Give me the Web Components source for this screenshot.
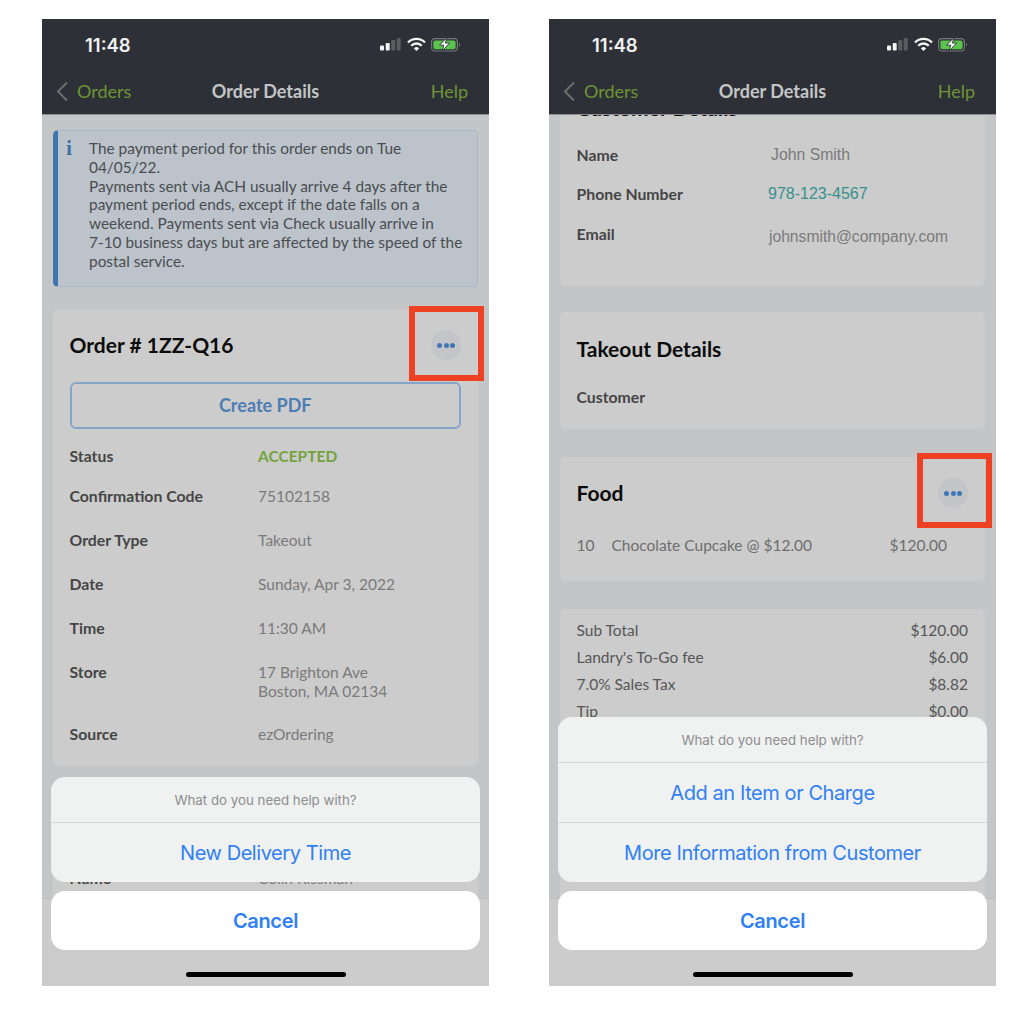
<!doctype html>
<html>
<head>
<meta charset="utf-8">
<style>
  html, body { margin: 0; background: #fff; }
  body { font-family: Lato, "Noto Sans", sans-serif; }
  .phones { display: flex; gap: 60px; padding: 19px 0 0 42px; }
</style>
</head>
<body>
<div class="phones">
  <phone-screen>
    <info-note>The payment period for this order ends on Tue<br>04/05/22.<br>Payments sent via ACH usually arrive 4 days after the payment period ends, except if the date falls on a weekend. Payments sent via Check usually arrive in<br>7-10 business days but are affected by the speed of the postal service.</info-note>
    <detail-card heading="Order # 1ZZ-Q16" more class="order">
      <pdf-button>Create PDF</pdf-button>
      <detail-row label="Status" h="40"><span style="color:#73a33c;font-weight:700">ACCEPTED</span></detail-row>
      <detail-row label="Confirmation Code" h="44">75102158</detail-row>
      <detail-row label="Order Type" h="44">Takeout</detail-row>
      <detail-row label="Date" h="44">Sunday, Apr 3, 2022</detail-row>
      <detail-row label="Time" h="44">11:30 AM</detail-row>
      <detail-row label="Store" h="62">17 Brighton Ave<br>Boston, MA 02134</detail-row>
      <detail-row label="Source" h="44">ezOrdering</detail-row>
    </detail-card>
    <detail-card class="next">
      <detail-row label="Name" h="44">Colin Rissman</detail-row>
    </detail-card>
    <action-sheet slot="sheet" title="What do you need help with?" actions="New Delivery Time"></action-sheet>
  </phone-screen>

  <phone-screen>
    <detail-card heading="Customer Details" class="customer">
      <detail-row label="Name" h="39" plain style="--shift:194.500px">John Smith</detail-row>
      <detail-row label="Phone Number" h="40" plain style="--shift:191.500px"><span style="color:#37918d;font-size:16px">978-123-4567</span></detail-row>
      <detail-row label="Email" h="40" plain style="--shift:192.500px"><div style="padding-top:3px;font-size:15.650px">johnsmith@company.com</div></detail-row>
    </detail-card>
    <detail-card heading="Takeout Details" class="takeout">
      <detail-row label="Customer" h="40" style="margin-top:3px"></detail-row>
    </detail-card>
    <detail-card heading="Food" more class="food">
      <food-line qty="10" item="Chocolate Cupcake @ $12.00" price="$120.00" style="margin-top:7px"></food-line>
    </detail-card>
    <detail-card class="summary">
      <total-line label="Sub Total" value="$120.00"></total-line>
      <total-line label="Landry's To-Go fee" value="$6.00"></total-line>
      <total-line label="7.0% Sales Tax" value="$8.82"></total-line>
      <total-line label="Tip" value="$0.00"></total-line>
    </detail-card>
    <action-sheet slot="sheet" title="What do you need help with?" actions="Add an Item or Charge|More Information from Customer"></action-sheet>
  </phone-screen>
</div>

<script>
class PhoneScreen extends HTMLElement {
  constructor() {
    super();
    this.attachShadow({ mode: "open" }).innerHTML = `
      <style>
        :host { display: flex; flex-direction: column; position: relative; width: 447px; height: 967px; background: #c4c5c7; overflow: hidden; }
        .body { flex: 1; min-height: 0; overflow: hidden; display: flex; flex-direction: column; padding: 0 11px; }
        .tabbar { height: 88px; flex: none; background: #cccccc; border-top: 1px solid #bdbdbd; box-sizing: border-box; }
        .home { position: absolute; left: 144px; bottom: 9px; width: 160px; height: 5px; border-radius: 3px; background: #000; }
      </style>
      <top-bar></top-bar>
      <div class="body"><slot></slot></div>
      <div class="tabbar"></div>
      <slot name="sheet"></slot>
      <div class="home"></div>`;
  }
}

class TopBar extends HTMLElement {
  constructor() {
    super();
    this.attachShadow({ mode: "open" }).innerHTML = `
      <style>
        :host { display: block; flex: none; background: #2d3036; height: 95px; box-shadow: 0 1px 0 #8f9092; position: relative; z-index: 1; }
        .status { height: 50px; display: flex; align-items: center; justify-content: space-between; padding: 0 29px 0 43px; box-sizing: border-box; }
        .time { font: 600 18.500px Inter, sans-serif; color: #f1f1f1; padding-top: 1px; }
        .nav { height: 44px; display: grid; grid-template-columns: 1fr auto 1fr; align-items: center; padding: 0 14px; }
        .back { display: flex; align-items: center; gap: 8px; color: #6e9535; font-size: 18px; }
        .title { color: #c4c5c6; font-size: 18px; font-weight: 700; }
        .help { color: #6e9535; font-size: 18px; text-align: right; padding-right: 7px; }
        svg { display: block; }
      </style>
      <div class="status">
        <span class="time">11:48</span>
        <svg width="80" height="16" viewBox="0 0 80 16">
          <rect x="0" y="9.500" width="4" height="5" rx="1" fill="#f4f4f4"/>
          <rect x="5.700" y="7" width="4" height="7.500" rx="1" fill="#f4f4f4"/>
          <rect x="11.200" y="4" width="4" height="10.500" rx="1" fill="#5a5c60"/>
          <rect x="16.700" y="2" width="4" height="12.500" rx="1" fill="#5a5c60"/>
          <path d="M28 6.500A12 12 0 0 1 45 6.500M31.200 9.700A7.500 7.500 0 0 1 41.800 9.700" fill="none" stroke="#f4f4f4" stroke-width="2.300"/>
          <path d="M33.900 12.400A3.600 3.600 0 0 1 39.100 12.400L36.500 15z" fill="#f4f4f4"/>
          <rect x="51.600" y="2.600" width="25.800" height="12.400" rx="3.500" fill="none" stroke="#75777a" stroke-width="1.200"/>
          <rect x="53.400" y="4.400" width="22.200" height="8.800" rx="2" fill="#5bc44c"/>
          <path d="M79 7v3.600c.8-.3 1-1 1-1.800s-.2-1.500-1-1.800z" fill="#75777a"/>
          <path d="M67 1.500 59.500 9.200h4.200l-1.600 6 7.500-8.200h-4.200z" fill="#f6f6f6" stroke="#2d3036" stroke-width=".9"/>
        </svg>
      </div>
      <div class="nav">
        <div class="back">
          <svg width="13" height="21" viewBox="0 0 13 21"><path d="M11 1.500 2 10.500l9 9" fill="none" stroke="#6d6e70" stroke-width="2"/></svg>
          <span>Orders</span>
        </div>
        <div class="title">Order Details</div>
        <div class="help">Help</div>
      </div>`;
  }
}

class InfoNote extends HTMLElement {
  constructor() {
    super();
    this.attachShadow({ mode: "open" }).innerHTML = `
      <style>
        :host { display: flex; gap: 16px; margin-top: 16px; height: 157px; box-sizing: border-box; flex: none; background: #bcc3cb; border: 1px solid #a3b7cd; border-left: 5px solid #3f76b0; border-radius: 5px; padding: 8px 6px 0 7px; color: #4a4d50; font-size: 15.400px; line-height: 18.800px; }
        i { font: 700 20px/18px "Liberation Serif", serif; font-style: normal; color: #3f6f9f; width: 8px; flex: none; text-align: center; }
      </style>
      <i>i</i><div><slot></slot></div>`;
  }
}

class DetailCard extends HTMLElement {
  constructor() {
    super();
    const heading = this.getAttribute("heading");
    const cls = this.className;
    const spots = {
      order: "margin-top:22px;height:457px;padding:0 17px 0 16.500px",
      next: "margin-top:29px;height:110px;padding:74px 17px 0 16.500px",
      customer: "margin-top:-19px;height:191px;padding:0 17px 0 16.500px",
      takeout: "margin-top:26px;height:117px;padding:1px 17px 0 16.500px",
      food: "margin-top:28px;height:124px;padding:0 17px 0 16.500px;--mark-x:-21px;--mark-y:-25px",
      summary: "margin-top:28px;height:300px;padding:8px 17px 0 16.500px",
    };
    this.attachShadow({ mode: "open" }).innerHTML = `
      <style>
        :host { display: block; flex: none; box-sizing: border-box; background: #cccccc; border-radius: 5px; ${spots[cls] || ""} }
        header { height: 72px; display: flex; align-items: center; justify-content: space-between; }
        h2 { margin: 0; font-size: 21px; line-height: 26px; font-weight: 700; color: #0c0c0c; }
        .customer-head { height: 51px; align-items: flex-start; }
      </style>
      ${heading ? `<header class="${cls === "customer" ? "customer-head" : ""}"><h2>${heading}</h2>${this.hasAttribute("more") ? "<more-button></more-button>" : ""}</header>` : ""}
      <slot></slot>`;
  }
}

class MoreButton extends HTMLElement {
  constructor() {
    super();
    this.attachShadow({ mode: "open" }).innerHTML = `
      <style>
        :host { display: flex; position: relative; align-items: center; justify-content: center; gap: 1.200px; width: 30px; height: 30px; border-radius: 50%; background: #c4c5c8; }
        b { width: 5px; height: 5px; border-radius: 50%; background: #3f76b5; }
        .mark { position: absolute; left: var(--mark-x, -22px); top: var(--mark-y, -24px); width: 75px; height: 75px; box-sizing: border-box; border: 6px solid #ee4023; }
      </style>
      <b></b><b></b><b></b><div class="mark"></div>`;
  }
}

class PdfButton extends HTMLElement {
  constructor() {
    super();
    this.attachShadow({ mode: "open" }).innerHTML = `
      <style>
        :host { display: flex; align-items: center; justify-content: center; box-sizing: border-box; height: 46.500px; margin: 1px 0 18.500px; border: 2px solid #86a3c8; border-radius: 6px; color: #4c7db3; font-size: 18px; font-weight: 700; }
      </style>
      <slot></slot>`;
  }
}

class DetailRow extends HTMLElement {
  constructor() {
    super();
    this.attachShadow({ mode: "open" }).innerHTML = `
      <style>
        :host { display: grid; grid-template-columns: var(--shift, 188.500px) 1fr; align-items: start; font-size: 15.500px; line-height: 18.500px; height: ${this.getAttribute("h") || 44}px; }
        .l { font-weight: 700; color: #454545; font-size: 15.800px; }
        .v { color: #7a7a7a; }
        :host([plain]) .v { font-family: "Liberation Sans", sans-serif; font-size: 15.800px; }
      </style>
      <div class="l">${this.getAttribute("label")}</div>
      <div class="v"><slot></slot></div>`;
  }
}

class FoodLine extends HTMLElement {
  constructor() {
    super();
    this.attachShadow({ mode: "open" }).innerHTML = `
      <style>
        :host { display: grid; grid-template-columns: 35px 278px auto; font-size: 15.500px; color: #6e6e6e; }
      </style>
      <span>${this.getAttribute("qty")}</span><span>${this.getAttribute("item")}</span><span>${this.getAttribute("price")}</span>`;
  }
}

class TotalLine extends HTMLElement {
  constructor() {
    super();
    this.attachShadow({ mode: "open" }).innerHTML = `
      <style>
        :host { display: flex; justify-content: space-between; font-size: 15.500px; line-height: 27px; color: #565656; }
      </style>
      <span>${this.getAttribute("label")}</span><span>${this.getAttribute("value")}</span>`;
  }
}

class ActionSheet extends HTMLElement {
  constructor() {
    super();
    const acciones = this.getAttribute("actions").split("|");
    this.attachShadow({ mode: "open" }).innerHTML = `
      <style>
        :host { display: flex; flex-direction: column; gap: 9px; position: absolute; left: 9px; right: 9px; bottom: 36px; font-family: Inter, sans-serif; z-index: 2; }
        .group { background: #f0f1f1; border-radius: 14px; overflow: hidden; }
        .title { height: 45px; display: flex; align-items: center; justify-content: center; font-size: 13.300px; color: #8d8d8e; }
        .action { height: 59px; border-top: 1px solid #d6d7d7; display: flex; align-items: center; justify-content: center; font-size: 20px; letter-spacing: -0.430px; color: #2f7ff7; }
        .cancel { height: 59px; background: #fff; border-radius: 14px; display: flex; align-items: center; justify-content: center; font-size: 20px; letter-spacing: -0.330px; font-weight: 600; color: #2f7ff7; }
      </style>
      <div class="group">
        <div class="title">${this.getAttribute("title")}</div>
        ${acciones.map((a) => `<div class="action">${a}</div>`).join("")}
      </div>
      <div class="cancel">Cancel</div>`;
  }
}

customElements.define("top-bar", TopBar);
customElements.define("more-button", MoreButton);
customElements.define("phone-screen", PhoneScreen);
customElements.define("info-note", InfoNote);
customElements.define("detail-card", DetailCard);
customElements.define("pdf-button", PdfButton);
customElements.define("detail-row", DetailRow);
customElements.define("food-line", FoodLine);
customElements.define("total-line", TotalLine);
customElements.define("action-sheet", ActionSheet);
</script>
</body>
</html>
